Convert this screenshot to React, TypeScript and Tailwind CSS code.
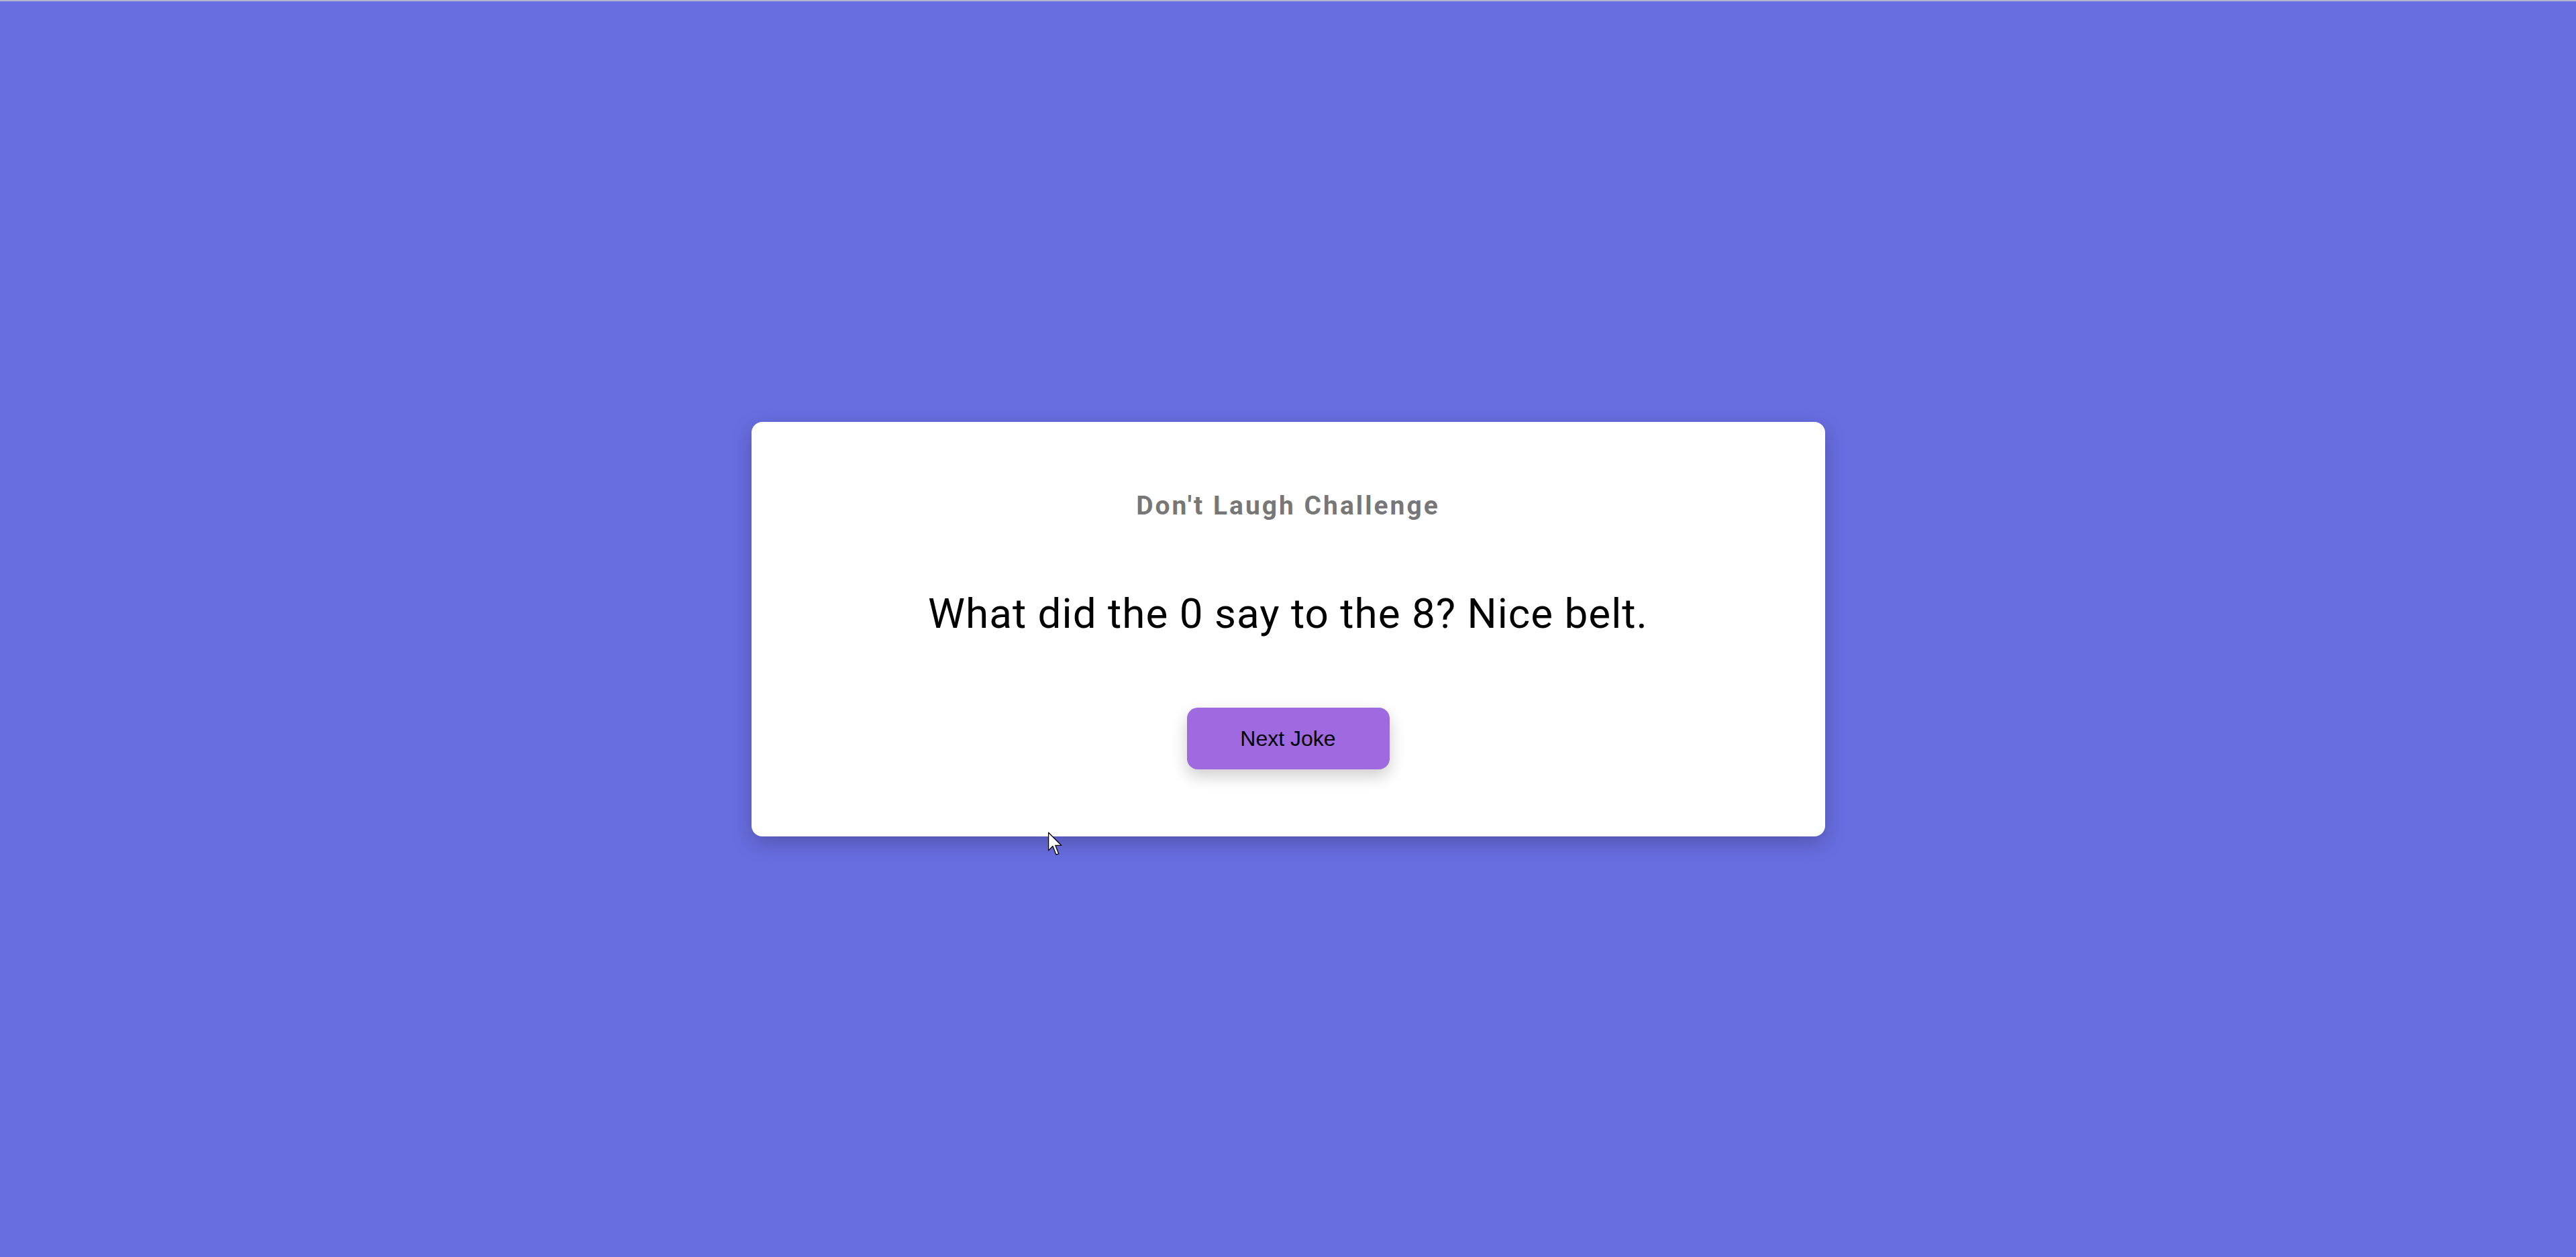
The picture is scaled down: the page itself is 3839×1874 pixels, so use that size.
const Cursor = () => (
  <svg
    className="absolute left-[1561px] top-[1238px]"
    width="26"
    height="38"
    viewBox="0 0 20 30"
  >
    <path
      d="M1 1 L1 22 L6 17 L10 27 L13 26 L9 16 L16 16 Z"
      fill="#ffffff"
      stroke="#000000"
      strokeWidth="1"
      strokeLinejoin="round"
    />
  </svg>
);

const App = () => {
  return (
    <div className="relative h-[1874px] w-full overflow-hidden bg-[#686de0] border-t-2 border-[#b3b6cc] flex items-center justify-center">
      <div className="w-[1600px] h-[618px] bg-white rounded-2xl shadow-[0_10px_30px_rgba(0,0,0,0.22)] flex flex-col items-center pt-[95px] text-center">
        <h3 className="font-['Roboto',sans-serif] font-bold text-[39px] leading-[60px] tracking-[3px] text-[#777777]">
          Don't Laugh Challenge
        </h3>
        <p className="mt-[84px] font-['Roboto',sans-serif] text-[62px] leading-[93px] tracking-[1px] text-black">
          What did the 0 say to the 8? Nice belt.
        </p>
        <button className="mt-[94px] w-[302px] h-[92px] rounded-2xl bg-[#9f69e0] font-['Liberation_Sans',Arial,sans-serif] text-[32px] text-black shadow-[0_10px_24px_rgba(0,0,0,0.2)]">
          Next Joke
        </button>
      </div>
      <Cursor />
    </div>
  );
};

export default App;
